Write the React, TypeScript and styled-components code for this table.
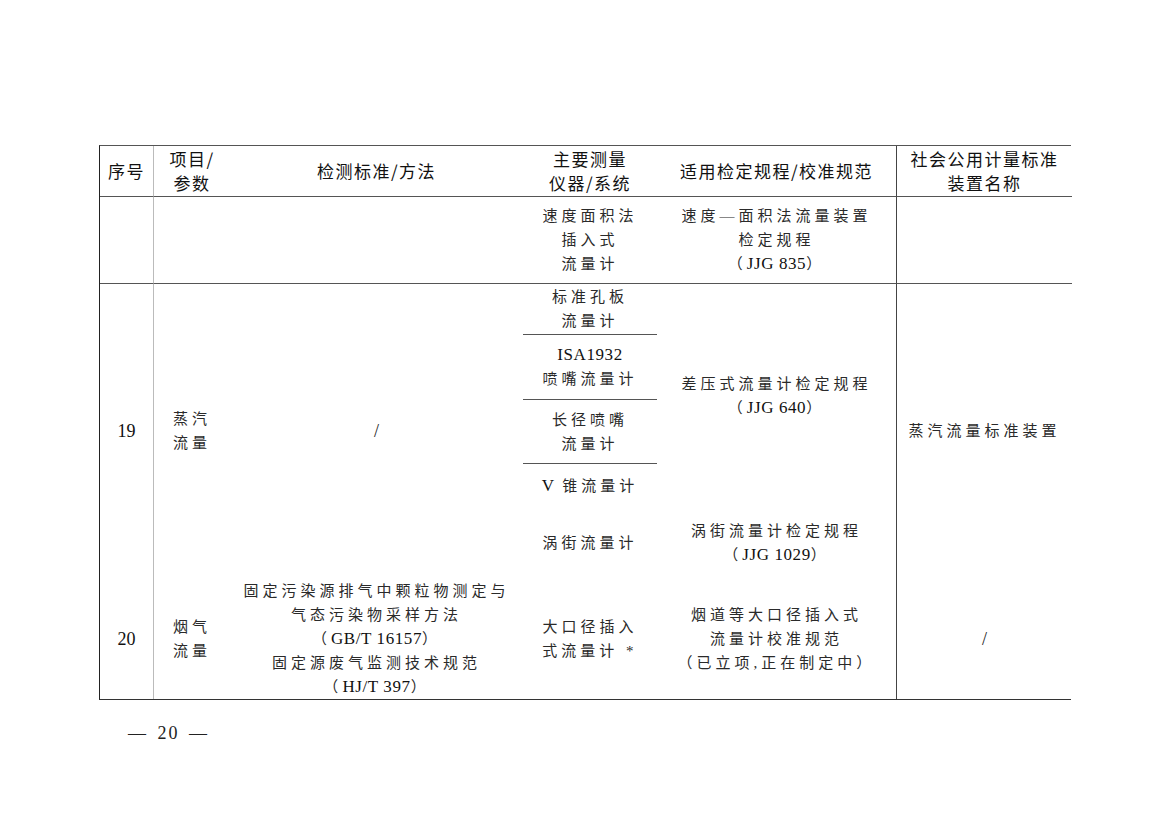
import React from "react";
import styled, { createGlobalStyle } from "styled-components";

const Global = createGlobalStyle`
  html, body { margin: 0; padding: 0; background: #fff; }
  body { font-family: "Noto Sans CJK SC", sans-serif; color: #111; }
  * { box-sizing: border-box; }
`;

const Page = styled.div`
  width: 1169px;
  height: 826px;
  padding: 145px 0 0 99px;
  background: #fff;
`;

const Table = styled.div`
  width: 972px;
  display: grid;
  grid-template-columns: 54px 76px 293px 134px 240px 175px;
  grid-template-rows: 51px 87px 51px 65px 64px 44px 70px 121px;
  border-top: 1px solid #555;
  border-bottom: 1.5px solid #333;
  border-left: 1.5px solid #222;
`;

type CellProps = {
  $col: string;
  $row: string;
  $bottom?: boolean;
  $right?: "light" | "dark";
  $head?: boolean;
};

const Cell = styled.div<CellProps>`
  grid-column: ${(p) => p.$col};
  grid-row: ${(p) => p.$row};
  display: flex;
  flex-direction: column;
  align-items: center;
  justify-content: center;
  text-align: center;
  line-height: 24px;
  white-space: nowrap;
  border-bottom: ${(p) => (p.$bottom ? "1px solid #555" : "none")};
  border-right: ${(p) =>
    p.$right === "light" ? "1px solid #bbb" : p.$right === "dark" ? "1px solid #444" : "none"};
  font-family: ${(p) =>
    p.$head ? `"Noto Sans CJK SC", sans-serif` : `"Liberation Serif", "Noto Sans CJK SC", serif`};
  font-size: ${(p) => (p.$head ? "17px" : "15px")};
  letter-spacing: ${(p) => (p.$head ? "1.5px" : "4px")};
  font-weight: 400;
  color: ${(p) => (p.$head ? "#111" : "#2a2a2a")};
`;

const Lat = styled.span`
  font-family: "Liberation Serif", serif;
  font-size: 17px;
  letter-spacing: 0.6px;
  color: #111;
`;

const Slash = styled.span`
  font-family: "Liberation Serif", serif;
  font-size: 18px;
  letter-spacing: 0;
  color: #222;
`;

const Num = styled.span`
  font-family: "Liberation Serif", serif;
  font-size: 18px;
  letter-spacing: 0;
  color: #111;
`;

const Footer = styled.div`
  margin-top: 23px;
  padding-left: 29px;
  font-family: "Liberation Serif", serif;
  font-size: 18px;
  word-spacing: 3px;
  letter-spacing: 2px;
  color: #222;
`;

export default function App() {
  return (
    <Page>
      <Global />
      <Table>
        {/* header */}
        <Cell $head $col="1" $row="1" $bottom $right="light">序号</Cell>
        <Cell $head $col="2" $row="1" $bottom>
          <div>项目/</div>
          <div>参数</div>
        </Cell>
        <Cell $head $col="3" $row="1" $bottom>检测标准/方法</Cell>
        <Cell $head $col="4" $row="1" $bottom>
          <div>主要测量</div>
          <div>仪器/系统</div>
        </Cell>
        <Cell $head $col="5" $row="1" $bottom $right="dark">适用检定规程/校准规范</Cell>
        <Cell $head $col="6" $row="1" $bottom>
          <div>社会公用计量标准</div>
          <div>装置名称</div>
        </Cell>

        {/* row A */}
        <Cell $col="1" $row="2" $bottom $right="light" />
        <Cell $col="2 / span 2" $row="2" $bottom />
        <Cell $col="4" $row="2" $bottom>
          <div>速度面积法</div>
          <div>插入式</div>
          <div>流量计</div>
        </Cell>
        <Cell $col="5" $row="2" $bottom $right="dark">
          <div>速度—面积法流量装置</div>
          <div>检定规程</div>
          <div>
            （<Lat>JJG 835</Lat>）
          </div>
        </Cell>
        <Cell $col="6" $row="2" $bottom />

        {/* row 19 */}
        <Cell $col="1" $row="3 / span 5" $right="light">
          <Num>19</Num>
        </Cell>
        <Cell $col="2" $row="3 / span 5">
          <div>蒸汽</div>
          <div>流量</div>
        </Cell>
        <Cell $col="3" $row="3 / span 5">
          <Slash>/</Slash>
        </Cell>
        <Cell $col="4" $row="3" $bottom>
          <div>标准孔板</div>
          <div>流量计</div>
        </Cell>
        <Cell $col="4" $row="4" $bottom>
          <div>
            <Lat>ISA1932</Lat>
          </div>
          <div>喷嘴流量计</div>
        </Cell>
        <Cell $col="4" $row="5" $bottom>
          <div>长径喷嘴</div>
          <div>流量计</div>
        </Cell>
        <Cell $col="4" $row="6">
          <div>
            <Lat>V</Lat> 锥流量计
          </div>
        </Cell>
        <Cell $col="4" $row="7">涡街流量计</Cell>
        <Cell $col="5" $row="3 / span 4" $right="dark">
          <div>差压式流量计检定规程</div>
          <div>
            （<Lat>JJG 640</Lat>）
          </div>
        </Cell>
        <Cell $col="5" $row="7" $right="dark">
          <div>涡街流量计检定规程</div>
          <div>
            （<Lat>JJG 1029</Lat>）
          </div>
        </Cell>
        <Cell $col="6" $row="3 / span 5">蒸汽流量标准装置</Cell>

        {/* row 20 */}
        <Cell $col="1" $row="8" $right="light">
          <Num>20</Num>
        </Cell>
        <Cell $col="2" $row="8">
          <div>烟气</div>
          <div>流量</div>
        </Cell>
        <Cell $col="3" $row="8">
          <div>固定污染源排气中颗粒物测定与</div>
          <div>气态污染物采样方法</div>
          <div>
            （<Lat>GB/T 16157</Lat>）
          </div>
          <div>固定源废气监测技术规范</div>
          <div>
            （<Lat>HJ/T 397</Lat>）
          </div>
        </Cell>
        <Cell $col="4" $row="8">
          <div>大口径插入</div>
          <div>式流量计 *</div>
        </Cell>
        <Cell $col="5" $row="8" $right="dark">
          <div>烟道等大口径插入式</div>
          <div>流量计校准规范</div>
          <div>（已立项,正在制定中）</div>
        </Cell>
        <Cell $col="6" $row="8">
          <Slash>/</Slash>
        </Cell>
      </Table>
      <Footer>— 20 —</Footer>
    </Page>
  );
}
